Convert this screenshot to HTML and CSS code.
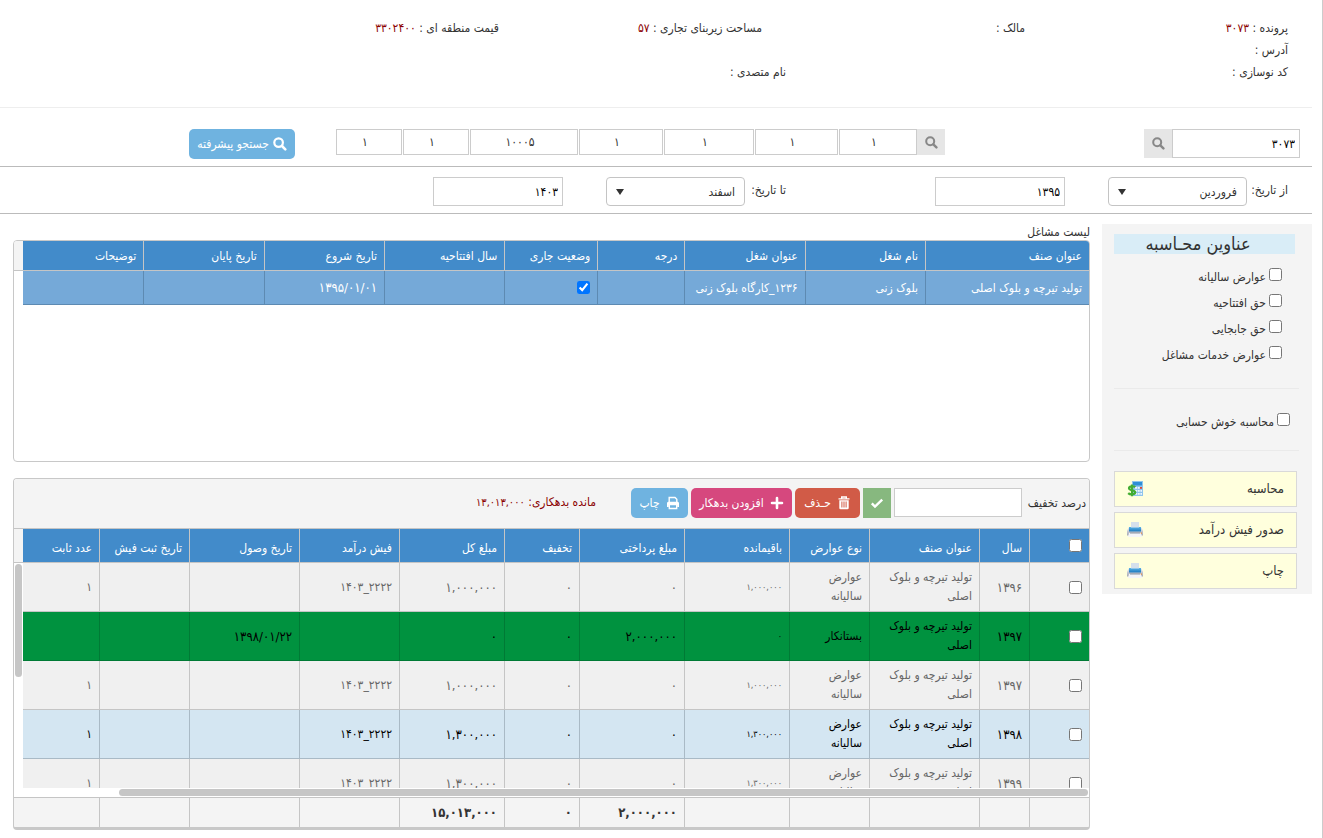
FILE: index.html
```html
<!DOCTYPE html>
<html lang="fa" dir="rtl">
<head>
<meta charset="utf-8">
<title>محاسبه عوارض مشاغل</title>
<link rel="stylesheet" href="styles.css">
</head>
<body>
<svg class="defs" width="0" height="0" aria-hidden="true">
  <symbol id="i-search" viewBox="0 0 14 14"><circle cx="5.6" cy="5.6" r="4.3" fill="none" stroke="currentColor" stroke-width="2.2"/><path d="M9 9l3.300 3.300" stroke="currentColor" stroke-width="2.600" stroke-linecap="round"/></symbol>
  <symbol id="i-check" viewBox="0 0 14 14"><path d="M1.8 7.4l3.2 3.2 7.2-7" fill="none" stroke="currentColor" stroke-width="2.4"/></symbol>
  <symbol id="i-trash" viewBox="0 0 14 14"><path d="M4.700 2.200V1h4.600v1.200M1.500 2.900h11" fill="none" stroke="currentColor" stroke-width="1.400"/><path d="M2.300 4.300h9.400V12a1.200 1.200 0 0 1-1.200 1.200H3.500A1.200 1.200 0 0 1 2.300 12zM4.400 5.500v6h1v-6zm2.100 0v6h1v-6zm2.100 0v6h1v-6z" fill="currentColor" fill-rule="evenodd"/></symbol>
  <symbol id="i-plus" viewBox="0 0 14 14"><path d="M7 2v10M2 7h10" stroke="currentColor" stroke-width="2.600" stroke-linecap="round"/></symbol>
  <symbol id="i-print" viewBox="0 0 14 14"><path d="M3.200 6V1.500h5.800l1.800 1.800V6" fill="none" stroke="currentColor" stroke-width="1.400"/><path d="M1 11V7.200C1 6.200 1.800 5.700 2.600 5.700h8.800c.8 0 1.600.5 1.600 1.500V11h-1.800V9.200H2.800V11z" fill="currentColor"/><path d="M3.300 9v3.500h7.400V9" fill="none" stroke="currentColor" stroke-width="1.400"/></symbol>
  <linearGradient id="g-blue" x1="0" y1="0" x2="0" y2="1"><stop offset="0" stop-color="#5cb4e8"/><stop offset="1" stop-color="#1a78bd"/></linearGradient>
  <linearGradient id="g-gray" x1="0" y1="0" x2="0" y2="1"><stop offset="0" stop-color="#e6e7ee"/><stop offset="1" stop-color="#a3a7b3"/></linearGradient>
  <symbol id="i-calc" viewBox="0 0 16 16"><path d="M5 0h11v15H5z" fill="#8fc4ec"/><path d="M6 1h9v3.500H6z" fill="#2e8fd6"/><path d="M8 6h2v1.800H8zm2.700 0h2v1.800h-2zM8 9h2v1.800H8zm2.700 0h2v1.800h-2zm2.700 0h1.600v1.800h-1.600zM8 12h2v1.800H8zm2.700 0h2v1.800h-2zm2.700 0h1.600v1.800h-1.600z" fill="#eef6fd"/><path d="M13 6h2v1.800h-2z" fill="#e0452f"/><path d="M8.200 6.200C7 4.900 2 4.700 2 7.300c0 2.500 6.200 1.300 6.200 4 0 2.700-5.400 2.400-7 .8M5 3.600v11.600" fill="none" stroke="#43ad32" stroke-width="2.200"/></symbol>
  <symbol id="i-printer" viewBox="0 0 16 16"><path d="M1.500 5.500h13L16 9v4.500H0V9z" fill="url(#g-gray)"/><path d="M2 5h12v4.500H2z" fill="url(#g-blue)"/><path d="M4 0h8v5.500H4z" fill="#d5e0ec"/><path d="M2 11h12l1 4H1z" fill="#f4f5f9"/><path d="M3 10.500h10v1H3z" fill="#8d94a2"/><path d="M13.800 10.500h1.200v1.200h-1.200z" fill="#e99243"/></symbol>
</svg>
<main class="page">
  <section class="info">
    <div class="info-row">
      <span>پرونده : <b>۳۰۷۳</b></span><span>مالک :</span><span>مساحت زیربنای تجاری : <b>۵۷</b></span><span>قیمت منطقه ای : <b>۳۳۰۲۴۰۰</b></span>
    </div>
    <div class="info-row"><span>آدرس :</span></div>
    <div class="info-row wide"><span>کد نوسازی :</span><span>نام متصدی :</span></div>
  </section>

  <section class="search">
    <div class="group">
      <input class="field file-no" aria-label="شماره پرونده" value="۳۰۷۳">
      <button class="find tall" aria-label="جستجوی پرونده"><svg class="icon"><use href="#i-search"/></svg></button>
    </div>
    <div class="group">
      <button class="find" aria-label="جستجوی کد"><svg class="icon"><use href="#i-search"/></svg></button>
      <div class="codes">
        <input class="field" aria-label="کد ۱" value="۱"><input class="field" aria-label="کد ۲" value="۱"><input class="field" aria-label="کد ۳" value="۱"><input class="field" aria-label="کد ۴" value="۱"><input class="field" aria-label="کد ۵" value="۱۰۰۰۵"><input class="field" aria-label="کد ۶" value="۱"><input class="field" aria-label="کد ۷" value="۱">
      </div>
    </div>
    <div class="group"><button class="btn sky advanced"><svg class="icon"><use href="#i-search"/></svg>جستجو پیشرفته</button></div>
  </section>

  <section class="dates">
    <div class="group">
      <label for="m1">از تاریخ:</label>
      <span class="select"><select id="m1"><option>فروردین</option></select></span>
      <input class="field year" aria-label="از سال" value="۱۳۹۵">
    </div>
    <div class="group">
      <label for="m2">تا تاریخ:</label>
      <span class="select"><select id="m2"><option>اسفند</option></select></span>
      <input class="field year" aria-label="تا سال" value="۱۴۰۳">
    </div>
  </section>

  <div class="content">
    <aside class="side">
      <h2>عناوین محـاسبه</h2>
      <div class="checks">
        <label><input type="checkbox">عوارض سالیانه</label>
        <label><input type="checkbox">حق افتتاحیه</label>
        <label><input type="checkbox">حق جابجایی</label>
        <label><input type="checkbox">عوارض خدمات مشاغل</label>
      </div>
      <div class="good"><label><input type="checkbox">محاسبه خوش حسابی</label></div>
      <div class="actions">
        <button>محاسبه<svg class="pic"><use href="#i-calc"/></svg></button>
        <button>صدور فیش درآمد<svg class="pic"><use href="#i-printer"/></svg></button>
        <button>چاپ<svg class="pic"><use href="#i-printer"/></svg></button>
      </div>
    </aside>

    <div class="main">
      <h3>لیست مشاغل</h3>
      <section class="panel jobs">
        <table>
          <colgroup><col class="j164"><col class="j120"><col class="j120"><col class="j87"><col class="j93"><col class="j120"><col class="j120"><col class="j120"><col class="j120"><col class="gutter"></colgroup>
          <thead><tr><th>عنوان صنف</th><th>نام شغل</th><th>عنوان شغل</th><th>درجه</th><th>وضعیت جاری</th><th>سال افتتاحیه</th><th>تاریخ شروع</th><th>تاریخ پایان</th><th>توضیحات</th><td class="gut"></td></tr></thead>
          <tbody><tr><td>تولید تیرچه و بلوک اصلی</td><td>بلوک زنی</td><td>۱۲۳۶_کارگاه بلوک زنی</td><td></td><td><input type="checkbox" checked aria-label="وضعیت جاری"></td><td></td><td class="num">۱۳۹۵/۰۱/۰۱</td><td></td><td></td><td class="gut"></td></tr></tbody>
        </table>
      </section>

      <section class="panel dues">
        <div class="toolbar">
          <label for="off">درصد تخفیف</label>
          <input class="field" id="off">
          <button class="btn ok" aria-label="تایید"><svg class="icon"><use href="#i-check"/></svg></button>
          <button class="btn red"><svg class="icon"><use href="#i-trash"/></svg>حـذف</button>
          <button class="btn pink"><svg class="icon"><use href="#i-plus"/></svg>افزودن بدهکار</button>
          <button class="btn sky"><svg class="icon"><use href="#i-print"/></svg>چاپ</button>
          <span class="debt">مانده بدهکاری: <span>۱۳,۰۱۳,۰۰۰</span></span>
        </div>
        <div class="frame head">
          <table>
            <colgroup><col class="d60"><col class="d50"><col class="d110"><col class="d80"><col class="d105"><col class="d105"><col class="d75"><col class="d105"><col class="d100"><col class="d110"><col class="d90"><col class="d76"></colgroup>
            <thead><tr><th><input type="checkbox" aria-label="انتخاب همه"></th><th>سال</th><th>عنوان صنف</th><th>نوع عوارض</th><th>باقیمانده</th><th>مبلغ پرداختی</th><th>تخفیف</th><th>مبلغ کل</th><th>فیش درآمد</th><th>تاریخ وصول</th><th>تاریخ ثبت فیش</th><th>عدد ثابت</th></tr></thead>
          </table>
        </div>
        <div class="frame body">
          <table>
            <colgroup><col class="d60"><col class="d50"><col class="d110"><col class="d80"><col class="d105"><col class="d105"><col class="d75"><col class="d105"><col class="d100"><col class="d110"><col class="d90"><col class="d76"></colgroup>
            <tbody>
              <tr><td><input type="checkbox" aria-label="انتخاب"></td><td class="num">۱۳۹۶</td><td>تولید تیرچه و بلوک اصلی</td><td>عوارض سالیانه</td><td class="small">۱,۰۰۰,۰۰۰</td><td class="num">۰</td><td class="num">۰</td><td class="num">۱,۰۰۰,۰۰۰</td><td><bdi dir="ltr">۱۴۰۳_۲۲۲۲</bdi></td><td></td><td></td><td>۱</td></tr>
              <tr class="credit"><td><input type="checkbox" aria-label="انتخاب"></td><td class="num">۱۳۹۷</td><td>تولید تیرچه و بلوک اصلی</td><td>بستانکار</td><td class="small">۰</td><td class="num">۲,۰۰۰,۰۰۰</td><td class="num">۰</td><td class="num">۰</td><td></td><td class="num">۱۳۹۸/۰۱/۲۲</td><td></td><td></td></tr>
              <tr><td><input type="checkbox" aria-label="انتخاب"></td><td class="num">۱۳۹۷</td><td>تولید تیرچه و بلوک اصلی</td><td>عوارض سالیانه</td><td class="small">۱,۰۰۰,۰۰۰</td><td class="num">۰</td><td class="num">۰</td><td class="num">۱,۰۰۰,۰۰۰</td><td><bdi dir="ltr">۱۴۰۳_۲۲۲۲</bdi></td><td></td><td></td><td>۱</td></tr>
              <tr class="hover"><td><input type="checkbox" aria-label="انتخاب"></td><td class="num">۱۳۹۸</td><td>تولید تیرچه و بلوک اصلی</td><td>عوارض سالیانه</td><td class="small">۱,۳۰۰,۰۰۰</td><td class="num">۰</td><td class="num">۰</td><td class="num">۱,۳۰۰,۰۰۰</td><td><bdi dir="ltr">۱۴۰۳_۲۲۲۲</bdi></td><td></td><td></td><td>۱</td></tr>
              <tr><td><input type="checkbox" aria-label="انتخاب"></td><td class="num">۱۳۹۹</td><td>تولید تیرچه و بلوک اصلی</td><td>عوارض سالیانه</td><td class="small">۱,۳۰۰,۰۰۰</td><td class="num">۰</td><td class="num">۰</td><td class="num">۱,۳۰۰,۰۰۰</td><td><bdi dir="ltr">۱۴۰۳_۲۲۲۲</bdi></td><td></td><td></td><td>۱</td></tr>
            </tbody>
          </table>
          <div class="vbar"></div>
        </div>
        <div class="hbar"></div>
        <div class="frame foot">
          <table>
            <colgroup><col class="d60"><col class="d50"><col class="d110"><col class="d80"><col class="d105"><col class="d105"><col class="d75"><col class="d105"><col class="d100"><col class="d110"><col class="d90"><col class="d76"></colgroup>
            <tbody><tr><td></td><td></td><td></td><td></td><td></td><td>۲,۰۰۰,۰۰۰</td><td>۰</td><td>۱۵,۰۱۳,۰۰۰</td><td></td><td></td><td></td><td></td></tr></tbody>
          </table>
        </div>
      </section>
    </div>
  </div>
</main>
</body>
</html>
```
FILE: styles.css
```css
* { box-sizing: border-box; }
body {
  margin: 0;
  background: #fff;
  color: #333;
  font: 12px/20px "DejaVu Sans Condensed", "DejaVu Sans", sans-serif;
}
button, input, select { font: inherit; color: inherit; }
button { cursor: pointer; }
input[type="checkbox"] { width: 13px; height: 13px; margin: 0; }
.defs { display: block; position: absolute; }
.page { min-height: 100vh; padding-right: 10px; border-right: 1px solid #ccc; overflow: hidden; }
.icon { width: 14px; height: 14px; flex: none; }

.info { height: 108px; padding: 18px 24px 0 0; border-bottom: 1px solid #eee; }
.info-row { display: grid; grid-template-columns: repeat(4, 263fr) 236fr; height: 22px; }
.info-row.wide { grid-template-columns: 502fr 786fr; }
.info-row b { color: #8b0000; font-weight: normal; }

.search {
  display: grid;
  grid-template-columns: 355fr 650fr 295fr;
  height: 59px;
  padding: 21px 12px 0 0;
  border-bottom: 1px solid #bbb;
}
.group { display: flex; align-items: flex-start; }
.field {
  height: 29px;
  min-width: 0;
  padding: 0 4px;
  border: 1px solid #ccc;
  background: #fff;
  color: #000;
}
.file-no { width: 128px; }
.find {
  display: flex;
  align-items: center;
  justify-content: center;
  width: 28px;
  height: 26px;
  padding: 0;
  border: 0;
  background: #e6e6e6;
  color: #888;
}
.find.tall { height: 29px; }
.find .icon { width: 13px; height: 13px; }
.codes { display: grid; grid-template-columns: 78px 83px 90px 84px 108px 66px 66px; gap: 1px; }
.codes .field { width: 100%; height: 26px; padding: 0 12px 0 4px; text-align: center; color: #333; }
.btn {
  display: flex;
  align-items: center;
  justify-content: center;
  gap: 4px;
  height: 30px;
  padding: 0 8px;
  border: 0;
  border-radius: 5px;
  color: #fff;
  white-space: nowrap;
}
.sky { background: #6fb3e0; }
.red { background: #d15b47; }
.pink { background: #d6487e; }
.ok { background: #87b87f; border-radius: 0; }
.advanced { width: 106px; }

.dates {
  display: grid;
  grid-template-columns: 502fr 786fr;
  height: 47px;
  padding: 10px 24px 0 0;
  border-bottom: 1px solid #bbb;
}
.dates label { width: 41px; line-height: 26px; white-space: nowrap; }
.select { position: relative; width: 139px; margin-left: 43px; }
.select select {
  display: block;
  width: 100%;
  height: 29px;
  padding: 0 9px;
  border: 1px solid #c4c4c4;
  border-radius: 4px;
  background: #fff;
  appearance: none;
}
.select::after {
  content: "";
  position: absolute;
  left: 10px;
  top: 12px;
  border: 4px solid transparent;
  border-top: 6px solid #333;
  border-bottom: 0;
}
.year { width: 130px; }

.content { display: flex; align-items: flex-start; gap: 12px; padding: 10px 0 0 13px; }
.side { flex: none; width: 210px; padding: 10px 13px 5px 12px; background: #f4f4f4; }
.side h2 {
  margin: 0 4px 0 0;
  padding-right: 13px;
  background: #d9edf7;
  font-size: 18px;
  font-weight: normal;
  line-height: 20px;
  text-align: center;
}
.side label { display: flex; align-items: flex-start; gap: 3px; height: 26px; }
.side label input { margin-top: 1px; }
.checks { padding: 13px 17px 17px 0; border-bottom: 1px solid #eaeaea; }
.good { padding: 23px 9px 12px 0; border-bottom: 1px solid #eaeaea; }
.actions { display: grid; gap: 5px; padding: 20px 2px 0 0; }
.actions button {
  display: flex;
  align-items: center;
  justify-content: space-between;
  height: 36px;
  padding: 0 12px;
  border: 1px solid #d9d9d9;
  background: #ffffdd;
  font-size: 13px;
}
.pic { width: 16px; height: 16px; }

.main { flex: 1; min-width: 0; }
.main h3 { margin: 0; font-size: 12px; font-weight: normal; line-height: 16px; }
.panel { border: 1px solid #c8c8c8; border-radius: 4px; overflow: hidden; }
table { width: 100%; table-layout: fixed; border-collapse: separate; border-spacing: 0; }
th, td { padding: 0 7px; text-align: right; font-weight: normal; border-left: 1px solid #c5c5c5; }
th { background: #428bca; color: #fff; white-space: nowrap; overflow: hidden; border-bottom: 1px solid #c5c5c5; }
th:last-child, td:last-child { border-left: 0; }
td input, th input { display: block; }

.jobs { height: 222px; }
.jobs th { height: 30px; }
.jobs tbody td { height: 34px; background: #75a9d8; color: #fff; border-color: #5d8ab2; border-bottom: 1px solid #5d8ab2; white-space: nowrap; }
.jobs th:nth-child(9), .jobs td:nth-child(9) { border-left: 0; }
.jobs thead .gut { padding: 0; background: #f4f4f4; border-bottom: 1px solid #c5c5c5; }
.jobs tbody .gut { padding: 0; background: #fff; border: 0; }
.num { font-size: 13px; }
.j164 { width: 164px; }
.j120 { width: auto; }
.j87 { width: 87px; }
.j93 { width: 93px; }
.gutter { width: 9px; }

.dues { margin-top: 16px; border-bottom-width: 3px; }
.toolbar {
  display: flex;
  align-items: center;
  gap: 3px;
  height: 50px;
  padding: 0 3px 2px 0;
  background: #f4f4f4;
  border-bottom: 1px solid #c5c5c5;
}
.toolbar label { width: 61px; white-space: nowrap; }
.toolbar .field { width: 128px; }
.toolbar .btn { gap: 6px; }
.toolbar .ok { width: 28px; padding: 0; }
.toolbar .red { width: 65px; }
.toolbar .pink { width: 101px; }
.toolbar .sky { width: 57px; }
.debt { margin-right: 32px; color: #8b0000; }
.debt span { font-size: 11px; }

.frame { display: flex; padding-left: 9px; }
.head { background: #f4f4f4; border-bottom: 1px solid #c5c5c5; }
.head th { height: 33px; padding-top: 4px; border-bottom: 0; }
.head th input { margin-bottom: 4px; }
.body { height: 225px; padding-left: 0; overflow: hidden; align-items: flex-start; }
.body table { flex: 1; min-width: 0; }
.body td { height: 49px; background: #f0f0f0; color: #666; line-height: 19px; border-bottom: 1px solid #c5c5c5; }
.body .small { font-size: 9px; }
.body .credit td { background: #00923f; color: #000; border-color: #007a35; }
.body .hover td { background: #d4e6f2; color: #000; border-color: #a9bac6; }
.vbar { flex: none; width: 7px; height: 113px; margin: 1px 1px 0; border-radius: 4px; background: #c6c6c6; }
.hbar { height: 7px; margin: 1px 1px 1px 105px; border-radius: 4px; background: #c6c6c6; }
.foot { background: #f4f4f4; border-top: 1px solid #c5c5c5; }
.foot td { height: 29px; font-size: 13px; font-weight: bold; }
.d50 { width: 50px; }
.d60 { width: 60px; }
.d75 { width: 75px; }
.d76 { width: auto; }
.d80 { width: 80px; }
.d90 { width: 90px; }
.d100 { width: 100px; }
.d105 { width: 105px; }
.d110 { width: 110px; }
```
